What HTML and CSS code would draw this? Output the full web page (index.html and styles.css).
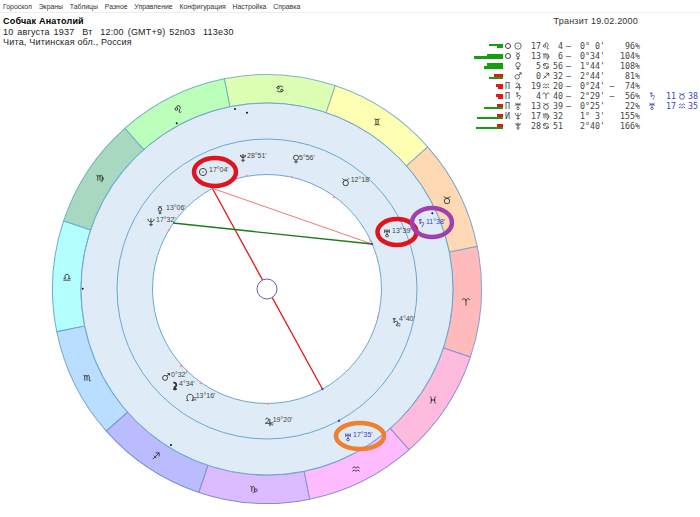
FILE: index.html
```html
<!DOCTYPE html>
<html lang="ru">

<head>
    <meta charset="UTF-8">
    <title>Транзит 19.02.2000</title>
    <link rel="stylesheet" href="styles.css">
</head>

<body>
    <nav class="menu">
        <span>Гороскоп</span>
        <span>Экраны</span>
        <span>Таблицы</span>
        <span>Разное</span>
        <span>Управление</span>
        <span>Конфигурация</span>
        <span>Настройка</span>
        <span>Справка</span>
    </nav>

    <main class="sheet">
        <!-- chart coordinates are page pixels, centre 267,289 -->
        <svg class="chart" viewBox="0 13 700 504" width="700" height="504">
            <defs>
                <path id="sector" d="M179.66 -48.14 L207.19 -55.52 A214.5 214.5 0 0 1 207.19 55.52 L179.66 48.14 A186 186 0 0 0 179.66 -48.14Z" />

                <!-- signs -->
                <symbol id="aries" viewBox="0 0 10 10"><path class="sym" d="M1 3C1 .5 4.5 .5 5 4V9M5 4C5.5 .5 9 .5 9 3" /></symbol>
                <symbol id="taurus" viewBox="0 0 10 10"><path class="sym" d="M1.5 1C2.5 3.5 7.5 3.5 8.5 1" /><circle class="sym" cx="5" cy="6.2" r="3" /></symbol>
                <symbol id="gemini" viewBox="0 0 10 10"><path class="sym" d="M2 1.5C4 2.5 6 2.5 8 1.5M2 8.5C4 7.5 6 7.5 8 8.5M3.8 2.3V7.7M6.2 2.3V7.7" /></symbol>
                <symbol id="cancer" viewBox="0 0 10 10"><path class="sym" d="M8.5 3C6 1 2 1.5 1.5 3.5M1.5 7C4 9 8 8.5 8.5 6.5" /><circle class="sym" cx="3" cy="3.6" r="1.3" /><circle class="sym" cx="7" cy="6.4" r="1.3" /></symbol>
                <symbol id="leo" viewBox="0 0 10 10"><circle class="sym" cx="3.2" cy="5" r="1.5" /><path class="sym" d="M4 3.7C2.5 1 7 0 7.5 3C7.8 5 5.5 7 6.5 8.5C7 9.2 8 9 8.5 8" /></symbol>
                <symbol id="virgo" viewBox="0 0 10 10"><path class="sym" d="M1 2C2 2 2.5 2.5 2.5 3.5V8M2.5 3.5C3 1.5 5 1.5 5 3.5V8M5 3.5C5.5 1.5 7.5 1.5 7.5 3.5V7C7.5 8.5 7 9.5 6 10M7.5 4.5C9.5 3.5 9.5 7 6.5 8.5" /></symbol>
                <symbol id="libra" viewBox="0 0 10 10"><path class="sym" d="M1 8.5H9M1 6.5H3.5C2 5 2.5 2 5 2C7.5 2 8 5 6.5 6.5H9" /></symbol>
                <symbol id="scorpio" viewBox="0 0 10 10"><path class="sym" d="M1 2C2 2 2.5 2.5 2.5 3.5V8M2.5 3.5C3 1.5 5 1.5 5 3.5V8M5 3.5C5.5 1.5 7.5 1.5 7.5 3.5V7C7.5 8.5 8.5 8.5 9.5 7.5" /></symbol>
                <symbol id="sag" viewBox="0 0 10 10"><path class="sym" d="M1.5 8.5L8.5 1.5M4.5 1.5H8.5V5.5M2.5 4.5L5.5 7.5" /></symbol>
                <symbol id="cap" viewBox="0 0 10 10"><path class="sym" d="M1 2C2.5 2 2.5 3 2.5 4V8M2.5 4C3 1.5 5.5 1.5 5.5 4V7.5C5.5 9 4.5 9.8 3.5 9.5M5.5 6C7 4 9 5 8.5 6.8C8 8.5 6 8.3 5.5 7" /></symbol>
                <symbol id="aqua" viewBox="0 0 10 10"><path class="sym" d="M1 4L3 2.5L5 4L7 2.5L9 4M1 7.5L3 6L5 7.5L7 6L9 7.5" /></symbol>
                <symbol id="pisces" viewBox="0 0 10 10"><path class="sym" d="M2 1C4 3 4 7 2 9M8 1C6 3 6 7 8 9M2 5H8" /></symbol>

                <!-- planets -->
                <symbol id="sun" viewBox="0 0 10 10"><circle class="sym" cx="5" cy="5" r="4" /><circle class="sym-dot" cx="5" cy="5" r=".7" /></symbol>
                <symbol id="mercury" viewBox="0 0 10 10"><circle class="sym" cx="5" cy="4.3" r="2" /><path class="sym" d="M3 .5A2.2 2.2 0 0 0 7 .5M5 6.3V10M3.3 8.3H6.7" /></symbol>
                <symbol id="venus" viewBox="0 0 10 10"><circle class="sym" cx="5" cy="3.5" r="2.8" /><path class="sym" d="M5 6.3V10M3 8.2H7" /></symbol>
                <symbol id="mars" viewBox="0 0 10 10"><circle class="sym" cx="4" cy="6" r="2.8" /><path class="sym" d="M6 4L9 1M6.5 1H9V3.5" /></symbol>
                <symbol id="jupiter" viewBox="0 0 10 10"><path class="sym" d="M2.5 3C2.5 .5 6 .5 5.5 3.5C5 5.5 3.5 6.5 2 7H9M7 2V10" /></symbol>
                <symbol id="saturn" viewBox="0 0 10 10"><path class="sym" d="M2.5 1.5H6M4 .5V6C4.5 4 8 3.5 8 5.5C8 7 6 8 6.5 9.5" /></symbol>
                <symbol id="uranus" viewBox="0 0 10 10"><path class="sym" d="M2.5 1V5M7.5 1V5M2.5 3H7.5M5 1V6.5" /><circle class="sym" cx="5" cy="8" r="1.5" /></symbol>
                <symbol id="neptune" viewBox="0 0 10 10"><path class="sym" d="M1.5 1.5C1.5 6 8.5 6 8.5 1.5M5 1V10M3 8H7" /></symbol>
                <symbol id="pluto" viewBox="0 0 10 10"><path class="sym" d="M2 1.5A3 3 0 0 0 8 1.5M5 4.8V10M3 7.5H7" /><circle class="sym" cx="5" cy="2.6" r="1.3" /></symbol>
                <symbol id="node" viewBox="0 0 10 10"><path class="sym" d="M1 9H3C1 7 .5 2 5 2C9.5 2 9 7 7 9H9" /></symbol>
                <symbol id="lilith" viewBox="0 0 10 10"><path class="sym-bold" d="M3 1C7 1 8 6 3.5 6.5M5 6.5V10M3 8.5H7" /></symbol>
            </defs>

            <g transform="translate(267 289)">
                <use href="#sector" class="s-aries" transform="rotate(3.5)" />
                <use href="#sector" class="s-taurus" transform="rotate(-26.5)" />
                <use href="#sector" class="s-gemini" transform="rotate(-56.5)" />
                <use href="#sector" class="s-cancer" transform="rotate(-86.5)" />
                <use href="#sector" class="s-leo" transform="rotate(-116.5)" />
                <use href="#sector" class="s-virgo" transform="rotate(-146.5)" />
                <use href="#sector" class="s-libra" transform="rotate(-176.5)" />
                <use href="#sector" class="s-scorpio" transform="rotate(-206.5)" />
                <use href="#sector" class="s-sag" transform="rotate(-236.5)" />
                <use href="#sector" class="s-cap" transform="rotate(-266.5)" />
                <use href="#sector" class="s-aqua" transform="rotate(-296.5)" />
                <use href="#sector" class="s-pisces" transform="rotate(-326.5)" />
                <circle class="ring" r="186" />
                <circle class="ring" r="150" />
                <circle class="hole" r="114.5" />
            </g>

            <g class="signs">
                <use href="#aries" x="461.5" y="297.5" width="9" height="9" />
                <use href="#taurus" x="442.5" y="195.5" width="9" height="9" />
                <use href="#gemini" x="372.5" y="117.5" width="9" height="9" />
                <use href="#cancer" x="275.5" y="84.5" width="9" height="9" />
                <use href="#leo" x="173.5" y="104.5" width="9" height="9" />
                <use href="#virgo" x="95.5" y="173.5" width="9" height="9" />
                <use href="#libra" x="62.5" y="272.5" width="9" height="9" />
                <use href="#scorpio" x="82.5" y="373.5" width="9" height="9" />
                <use href="#sag" x="151.5" y="451.5" width="9" height="9" />
                <use href="#cap" x="249.5" y="484.5" width="9" height="9" />
                <use href="#aqua" x="351.5" y="464.5" width="9" height="9" />
                <use href="#pisces" x="428.5" y="395.5" width="9" height="9" />
            </g>

            <line class="asp-red" x1="212.3" y1="188.3" x2="322.4" y2="389" />
            <line class="asp-pink" x1="212.3" y1="188.3" x2="372" y2="244" />
            <line class="asp-green" x1="173" y1="223" x2="372" y2="244" />
            <circle class="hub" cx="267" cy="289" r="10" />

            <g class="ticks">
                <circle cx="246.7" cy="175.7" r="1.2" />
                <circle cx="291.7" cy="177" r="1.2" />
                <circle cx="334" cy="197" r="1.2" />
                <circle cx="169" cy="230" r="1.2" />
                <circle cx="370.7" cy="241" r="1.2" />
                <circle cx="378" cy="317" r="1.2" />
                <circle cx="181" cy="366" r="1.2" />
                <circle cx="187" cy="371" r="1.2" />
                <circle cx="200.7" cy="383" r="1.2" />
                <circle cx="268" cy="403.7" r="1.2" />
            </g>
            <g class="ticks-blue">
                <circle cx="339" cy="420.7" r="1.2" />
                <circle cx="372" cy="244" r="1.2" />
                <circle cx="322.4" cy="389" r="1.2" />
            </g>
            <g class="dots">
                <circle cx="235" cy="109" r="1" />
                <circle cx="247" cy="112.7" r="1" />
                <circle cx="176.7" cy="123.3" r="1" />
                <circle cx="432.3" cy="213.3" r="1" />
                <circle cx="82.7" cy="288.7" r="1" />
                <circle cx="171" cy="445" r="1" />
            </g>

            <g class="planets">
                <use href="#pluto" x="238.5" y="153.5" width="9" height="9" /><text x="247" y="158">28°51'</text>
                <use href="#venus" x="291.5" y="154.5" width="9" height="9" /><text x="299" y="160">5°56'</text>
                <use href="#sun" x="198.5" y="167.5" width="9" height="9" /><text x="209" y="172">17°04'</text>
                <use href="#taurus" x="341.2" y="177.5" width="9" height="9" /><text x="350.7" y="182">12°18'</text>
                <use href="#mercury" x="155.5" y="205.5" width="9" height="9" /><text x="166" y="210">13°06'</text>
                <use href="#neptune" x="146.5" y="217.5" width="9" height="9" /><text x="156" y="222">17°32'</text>
                <use href="#uranus" x="382.5" y="228.5" width="9" height="9" /><text x="392" y="233">13°39'</text>
                <use href="#saturn" x="390.5" y="317.5" width="9" height="9" /><text class="rx" x="397" y="327">R</text><text x="399" y="321">4°40'</text>
                <use href="#mars" x="161.5" y="372.5" width="9" height="9" /><text x="171" y="377">0°32'</text>
                <use href="#lilith" x="170.5" y="381.5" width="9" height="9" /><text x="179" y="386">4°34'</text>
                <use href="#node" x="185.5" y="392.5" width="9" height="9" /><text class="rx" x="193" y="401">R</text><text x="195.7" y="398">13°16'</text>
                <use href="#jupiter" x="263.5" y="417" width="9" height="9" /><text class="rx" x="270" y="426">R</text><text x="272.7" y="422">19°20'</text>
            </g>
            <g class="planets transit">
                <use href="#saturn" x="416.5" y="218.5" width="9" height="9" /><text x="426" y="224">11°38'</text>
                <use href="#uranus" x="343.5" y="432.5" width="9" height="9" /><text x="353" y="437">17°35'</text>
            </g>

            <ellipse class="mark mark-red" cx="215" cy="172" rx="21" ry="14" />
            <ellipse class="mark mark-red" cx="397" cy="232" rx="19.5" ry="13" />
            <ellipse class="mark mark-purple" cx="432" cy="222.5" rx="20" ry="14.5" />
            <ellipse class="mark mark-orange" cx="360" cy="436" rx="24" ry="13" />
        </svg>

        <div class="info">
            <header class="head">
                <div class="person">
                    <strong>Собчак Анатолий</strong>
                    <div class="birth">10 августа 1937&nbsp; Вт&nbsp; 12:00 (GMT+9) 52n03&nbsp; 113e30</div>
                    <div>Чита, Читинская обл., Россия</div>
                </div>
                <div class="transit-date">Транзит 19.02.2000</div>
            </header>

            <div class="table">
                <div class="row">
                    <div class="bars"><i class="g" style="width:14px"></i><i class="g" style="width:6px"></i></div>
                    <span class="aspect"></span><svg class="ic"><use href="#sun" /></svg><span class="r">17</span><svg class="ic"><use href="#leo" /></svg><span class="r">4</span><span>–</span><span class="r">0°</span><span class="r">0'</span><span></span><span class="r">96%</span>
                </div>
                <div class="row">
                    <div class="bars"><i class="g" style="width:16px"></i><i class="g t" style="width:29px"></i></div>
                    <span class="aspect"></span><svg class="ic"><use href="#mercury" /></svg><span class="r">13</span><svg class="ic"><use href="#virgo" /></svg><span class="r">6</span><span>–</span><span class="r">0°</span><span class="r">34'</span><span></span><span class="r">104%</span>
                </div>
                <div class="row">
                    <div class="bars"><i class="g t" style="width:16px"></i><i class="g t" style="width:19px"></i></div>
                    <span></span><svg class="ic"><use href="#venus" /></svg><span class="r">5</span><svg class="ic"><use href="#cancer" /></svg><span class="r">56</span><span>–</span><span class="r">1°</span><span class="r">44'</span><span></span><span class="r">108%</span>
                </div>
                <div class="row">
                    <div class="bars"><i class="e t" style="width:9px"></i><i class="g" style="width:14px"></i></div>
                    <span></span><svg class="ic"><use href="#mars" /></svg><span class="r">0</span><svg class="ic"><use href="#sag" /></svg><span class="r">32</span><span>–</span><span class="r">2°</span><span class="r">44'</span><span></span><span class="r">81%</span>
                </div>
                <div class="row">
                    <div class="bars"><i class="e t" style="width:7px"></i><i class="e" style="width:5px"></i></div>
                    <span>П</span><svg class="ic"><use href="#jupiter" /></svg><span class="r">19</span><svg class="ic"><use href="#aqua" /></svg><span class="r">20</span><span>–</span><span class="r">0°</span><span class="r">24'</span><span>–</span><span class="r">74%</span>
                </div>
                <div class="row">
                    <div class="bars"><i class="e t" style="width:7px"></i><i class="e" style="width:5px"></i></div>
                    <span>П</span><svg class="ic"><use href="#saturn" /></svg><span class="r">4</span><svg class="ic"><use href="#aries" /></svg><span class="r">40</span><span>–</span><span class="r">2°</span><span class="r">29'</span><span>–</span><span class="r">56%</span>
                    <svg class="ic tr first"><use href="#saturn" /></svg><span class="tr r">11</span><svg class="ic tr"><use href="#taurus" /></svg><span class="tr r">38</span>
                </div>
                <div class="row">
                    <div class="bars"><i class="e t" style="width:6px"></i><i class="g" style="width:19px"></i></div>
                    <span>П</span><svg class="ic"><use href="#uranus" /></svg><span class="r">13</span><svg class="ic"><use href="#taurus" /></svg><span class="r">39</span><span>–</span><span class="r">0°</span><span class="r">25'</span><span></span><span class="r">22%</span>
                    <svg class="ic tr first"><use href="#uranus" /></svg><span class="tr r">17</span><svg class="ic tr"><use href="#aqua" /></svg><span class="tr r">35</span>
                </div>
                <div class="row">
                    <div class="bars"><i class="e t" style="width:6px"></i><i class="g" style="width:26px"></i></div>
                    <span>И</span><svg class="ic"><use href="#neptune" /></svg><span class="r">17</span><svg class="ic"><use href="#virgo" /></svg><span class="r">32</span><span></span><span class="r">1°</span><span class="r">3'</span><span></span><span class="r">155%</span>
                </div>
                <div class="row">
                    <div class="bars"><i class="e t" style="width:6px"></i><i class="g" style="width:27px"></i></div>
                    <span></span><svg class="ic"><use href="#pluto" /></svg><span class="r">28</span><svg class="ic"><use href="#cancer" /></svg><span class="r">51</span><span></span><span class="r">2°</span><span class="r">40'</span><span></span><span class="r">166%</span>
                </div>
            </div>
        </div>
    </main>
</body>

</html>
```
FILE: styles.css
```css
* {
    box-sizing: border-box;
}

html,
body {
    margin: 0;
    height: 517px;
    overflow: hidden;
    background: #fff;
}

body {
    font-family: "Liberation Sans", sans-serif;
    color: #222;
}

.menu {
    display: flex;
    height: 13px;
    padding-left: 3px;
    gap: 6.8px;
    font-size: 6.9px;
    line-height: 13px;
    color: #333;
    border-bottom: 1px solid #eee;
}

.sheet {
    display: grid;
}

.chart,
.info {
    grid-area: 1 / 1;
}

.chart {
    display: block;
}

/* header */

.info {
    position: relative;
    padding: 3px 62px 0 3px;
}

.head {
    display: flex;
    justify-content: space-between;
    font-size: 9px;
    line-height: 10.5px;
    letter-spacing: .2px;
}

.person strong {
    display: block;
    color: #000;
}

.birth {
    word-spacing: 1.2px;
}

.transit-date {
    color: #333;
}

/* glyphs, drawn once and reused in chart and table */

.sym {
    fill: none;
    stroke: currentColor;
    stroke-width: 1;
}

.sym-dot {
    fill: currentColor;
}

.sym-bold {
    fill: none;
    stroke: currentColor;
    stroke-width: 2;
}

/* sign colours */

.s-aries { fill: #ffbbbb; stroke: #8a9fd0; }
.s-taurus { fill: #ffd9b3; stroke: #7aa9c4; }
.s-gemini { fill: #ffffb3; stroke: #7fb6c2; }
.s-cancer { fill: #ddffb3; stroke: #7fb6c2; }
.s-leo { fill: #bbffbb; stroke: #70b4c0; }
.s-virgo { fill: #a8d8c0; stroke: #70b4c0; }
.s-libra { fill: #b3ffff; stroke: #6fa9d6; }
.s-scorpio { fill: #b9deff; stroke: #6fa0d6; }
.s-sag { fill: #bbbbff; stroke: #7a90d0; }
.s-cap { fill: #ddbbff; stroke: #7a90d0; }
.s-aqua { fill: #ffbbff; stroke: #8a90d8; }
.s-pisces { fill: #ffbbdd; stroke: #8a90d8; }

.ring {
    fill: #e0ebf8;
    stroke: #6aa8d0;
}

.hole {
    fill: #fff;
    stroke: #6aa8d0;
}

.signs {
    color: #333;
}

/* aspects */

.asp-red {
    stroke: #e01818;
    stroke-width: 1.3;
}

.asp-pink {
    stroke: #f07878;
}

.asp-green {
    stroke: #1a7a1a;
    stroke-width: 1.3;
}

.hub {
    fill: #fff;
    stroke: #6a60b0;
}

.ticks {
    fill: #f49a9a;
}

.ticks-blue {
    fill: #3a50d0;
}

.dots {
    fill: #111;
}

/* planets on the chart */

.planets {
    color: #333;
}

.planets text {
    font-size: 7px;
    fill: #444;
}

.planets .rx {
    font-size: 5px;
}

.transit {
    color: #3a44c0;
}

.transit text {
    fill: #3a44c0;
}

.mark {
    fill: none;
    stroke-width: 4.5;
}

.mark-red { stroke: #e0141e; }
.mark-purple { stroke: #a040b0; }
.mark-orange { stroke: #f08030; }

/* table on the right */

.table {
    position: absolute;
    top: 28px;
    left: 474px;
    font-family: "DejaVu Sans Mono", monospace;
    font-size: 8.3px;
    letter-spacing: 0;
    color: #444;
}

.row {
    display: grid;
    grid-template-columns: 29px 9px 11px 18px 10px 12px 11px 16px 15px 14px 21px 4px 16px 16px 11px 11px;
    align-items: center;
    height: 10.05px;
    line-height: 10px;
    text-align: center;
}

.row .r {
    text-align: right;
}

.ic {
    display: block;
    justify-self: center;
    width: 8px;
    height: 8px;
}

.aspect {
    justify-self: center;
    width: 6px;
    height: 6px;
    border: 1px solid #444;
    border-radius: 50%;
}

.bars {
    display: flex;
    flex-direction: column;
    align-items: flex-end;
    justify-content: center;
}

.bars i {
    display: block;
    height: 2px;
}

.bars .t {
    height: 3px;
}

.bars .g {
    background: #12a012;
}

.bars .e {
    background: #e01818;
}

.tr {
    color: #3a44c0;
}

.tr.first {
    grid-column: 13;
}
```
